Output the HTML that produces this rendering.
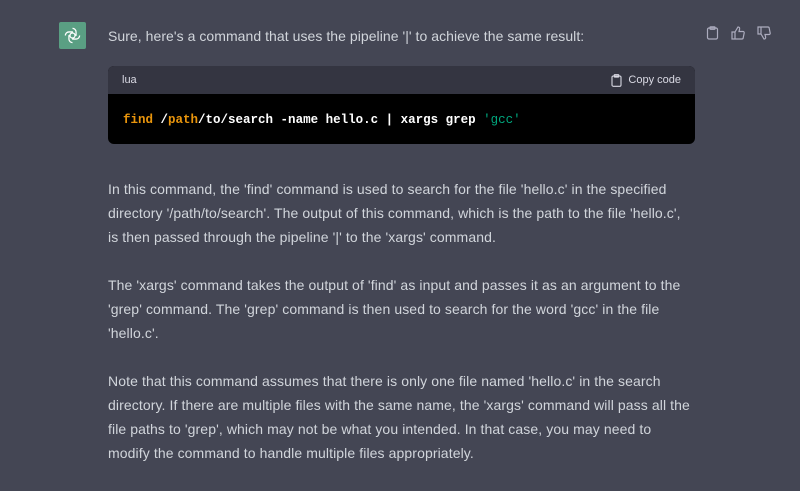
<!DOCTYPE html>
<html><head><meta charset="utf-8"><style>
*{margin:0;padding:0;box-sizing:border-box}
body{width:800px;height:491px;background:#444654;overflow:hidden;position:relative;font-family:"Liberation Sans",sans-serif;color:#d1d5db}
.av{position:absolute;left:59px;top:22px;width:27px;height:27px;background:#5a9f83;border-radius:2px;display:flex;align-items:center;justify-content:center}
.l{position:absolute;left:108px;font-size:14px;line-height:24px;white-space:nowrap;letter-spacing:0.1px}
.code{position:absolute;left:108px;top:66px;width:587px;height:78px;background:#000;border-radius:6px;overflow:hidden}
.hd{height:28px;background:#343541;font-size:11px;color:#d9d9e3;display:flex;align-items:center;justify-content:space-between;padding:0 14px 0 14px}
.cp{display:flex;align-items:center;gap:6px}
.cd{position:absolute;left:15px;top:47px;font-family:"Liberation Mono",monospace;font-size:12.5px;color:#fff;white-space:pre;font-weight:bold;-webkit-text-stroke:0}
.o{color:#e9950c}.g{color:#00a67d;font-weight:normal}
.ic{position:absolute;top:26px}
</style></head><body>
<div class="av"><svg width="19" height="19" viewBox="0 0 24 24" fill="none" stroke="#fff" stroke-width="1.6"><circle cx="12" cy="12" r="3.2"/><path d="M12 3a4.5 4.5 0 0 1 4.5 4.5v5M21 12a4.5 4.5 0 0 1-4.5 4.5h-5M12 21a4.5 4.5 0 0 1-4.5-4.5v-5M3 12a4.5 4.5 0 0 1 4.5-4.5h5"/></svg></div>
<div class="l" style="top:24px;letter-spacing:0.05px">Sure, here's a command that uses the pipeline '|' to achieve the same result:</div>
<svg class="ic" style="left:706px" width="13" height="14" viewBox="0 0 13 14" fill="none" stroke="#acacbe" stroke-width="1.2"><rect x="1.5" y="2" width="10" height="11" rx="1.5"/><rect x="4" y="0.8" width="5" height="2.5" rx="0.6"/></svg>
<svg class="ic" style="left:731px" width="14" height="14" viewBox="0 0 14 14" fill="none" stroke="#acacbe" stroke-width="1.2"><path d="M1 6h3v7H1zM4 6l3-5c1.2 0 1.8.8 1.6 2L8 5.5h4a1.2 1.2 0 0 1 1.2 1.4l-1 5a1.3 1.3 0 0 1-1.3 1.1H4"/></svg>
<svg class="ic" style="left:757px" width="14" height="14" viewBox="0 0 14 14" fill="none" stroke="#acacbe" stroke-width="1.2"><path d="M1 1h3v7H1zM4 8l3 5c1.2 0 1.8-.8 1.6-2L8 8.5h4a1.2 1.2 0 0 0 1.2-1.4l-1-5A1.3 1.3 0 0 0 10.9 1H4"/></svg>
<div class="code"><div class="hd"><span>lua</span><span class="cp"><svg width="11" height="13" viewBox="0 0 11 13" fill="none" stroke="#d9d9e3" stroke-width="1.1"><rect x="1" y="2" width="9" height="10.3" rx="1.3"/><rect x="3.2" y="0.7" width="4.6" height="2.4" rx="0.5"/></svg>Copy code</span></div>
<div class="cd"><span class="o">find</span> /<span class="o">path</span>/to/search -name hello.c | xargs grep <span class="g">'gcc'</span></div></div>
<div class="l" style="top:177px">In this command, the 'find' command is used to search for the file 'hello.c' in the specified</div>
<div class="l" style="top:201px">directory '/path/to/search'. The output of this command, which is the path to the file 'hello.c',</div>
<div class="l" style="top:225px">is then passed through the pipeline '|' to the 'xargs' command.</div>
<div class="l" style="top:273px">The 'xargs' command takes the output of 'find' as input and passes it as an argument to the</div>
<div class="l" style="top:297px">'grep' command. The 'grep' command is then used to search for the word 'gcc' in the file</div>
<div class="l" style="top:321px">'hello.c'.</div>
<div class="l" style="top:369px">Note that this command assumes that there is only one file named 'hello.c' in the search</div>
<div class="l" style="top:393px">directory. If there are multiple files with the same name, the 'xargs' command will pass all the</div>
<div class="l" style="top:417px">file paths to 'grep', which may not be what you intended. In that case, you may need to</div>
<div class="l" style="top:441px">modify the command to handle multiple files appropriately.</div>
</body></html>
